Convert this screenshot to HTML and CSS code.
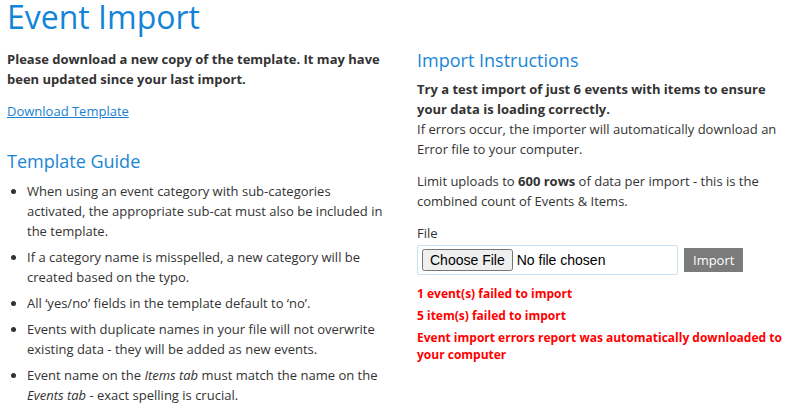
FILE: index.html
```html
<!DOCTYPE html>
<html lang="en">
<head>
<meta charset="utf-8">
<title>Event Import</title>
<link rel="stylesheet" href="styles.css">
</head>
<body>
<div class="page">
  <h1 class="title">Event Import</h1>
  <div class="columns">
    <div class="col-left">
      <p class="lead">Please download a new copy of the template. It may have been updated since your last import.</p>
      <p class="link-row"><a href="#" class="link">Download Template</a></p>
      <h3 class="section-title guide-title">Template Guide</h3>
      <ul class="guide">
        <li>When using an event category with sub-categories activated, the appropriate sub-cat must also be included in the template.</li>
        <li>If a category name is misspelled, a new category will be created based on the typo.</li>
        <li>All ‘yes/no’ fields in the template default to ‘no’.</li>
        <li>Events with duplicate names in your file will not overwrite existing data - they will be added as new events.</li>
        <li>Event name on the <em>Items tab</em> must match the name on the <em>Events tab</em> - exact spelling is crucial.</li>
      </ul>
    </div>
    <div class="col-right">
      <h3 class="section-title">Import Instructions</h3>
      <p class="instr"><strong>Try a test import of just 6 events with items to ensure your data is loading correctly.</strong><br>If errors occur, the importer will automatically download an Error file to your computer.</p>
      <p class="limit">Limit uploads to <strong>600 rows</strong> of data per import - this is the combined count of Events &amp; Items.</p>
      <label class="file-label" for="file">File</label>
      <div class="upload-row">
        <div class="file-box"><input type="file" id="file" class="file-input"></div>
        <button type="button" class="import-btn">Import</button>
      </div>
      <div class="errors">
        <p class="error">1 event(s) failed to import</p>
        <p class="error">5 item(s) failed to import</p>
        <p class="error">Event import errors report was automatically downloaded to your computer</p>
      </div>
    </div>
  </div>
</div>
</body>
</html>
```
FILE: styles.css
```css
html, body {
  margin: 0;
  padding: 0;
  background: #ffffff;
}
body {
  font-family: "Open Sans", "Noto Sans", sans-serif;
  font-size: 13px;
  line-height: 20px;
  color: #333333;
}
.page {
  padding: 0 7px;
}
.title {
  margin: 0 0 4px;
  font-size: 32px;
  line-height: 34px;
  font-weight: 400;
  color: #1385d8;
}
.columns {
  display: grid;
  grid-template-columns: 384px 368px;
  column-gap: 26px;
}
.lead {
  margin: 11px 0 0;
  font-weight: 700;
}
.link-row {
  margin: 12px 0 0;
}
.link {
  color: #1a7fcf;
  text-decoration: underline;
}
.section-title {
  margin: 0;
  font-size: 18px;
  line-height: 24px;
  font-weight: 400;
  color: #1a86d6;
}
.guide-title {
  margin-top: 28px;
}
.guide {
  margin: 8px 0 0;
  padding: 0 0 0 20px;
}
.guide li {
  margin-bottom: 6px;
}
.col-right {
  padding-top: 10px;
}
.instr {
  margin: 7px 0 0;
}
.limit {
  margin: 12px 0 0;
}
.file-label {
  display: block;
  margin-top: 12px;
}
.upload-row {
  display: flex;
  align-items: center;
  gap: 6px;
  margin-top: 2px;
}
.file-box {
  width: 251px;
  height: 22px;
  padding: 3px 4px;
  border: 1px solid #c9e0f2;
  border-radius: 2px;
}
.file-input {
  font-family: "Liberation Sans", Arial, sans-serif;
  font-size: 14px;
  color: #000;
}
.import-btn {
  height: 24px;
  padding: 0 9px;
  border: 0;
  background: #7b7b7b;
  color: #ffffff;
  font-family: "Open Sans", sans-serif;
  font-size: 13px;
}
.errors {
  margin-top: 10px;
}
.error {
  margin: 0 0 5px;
  font-size: 12px;
  line-height: 17px;
  font-weight: 700;
  color: #ff0000;
}
```
